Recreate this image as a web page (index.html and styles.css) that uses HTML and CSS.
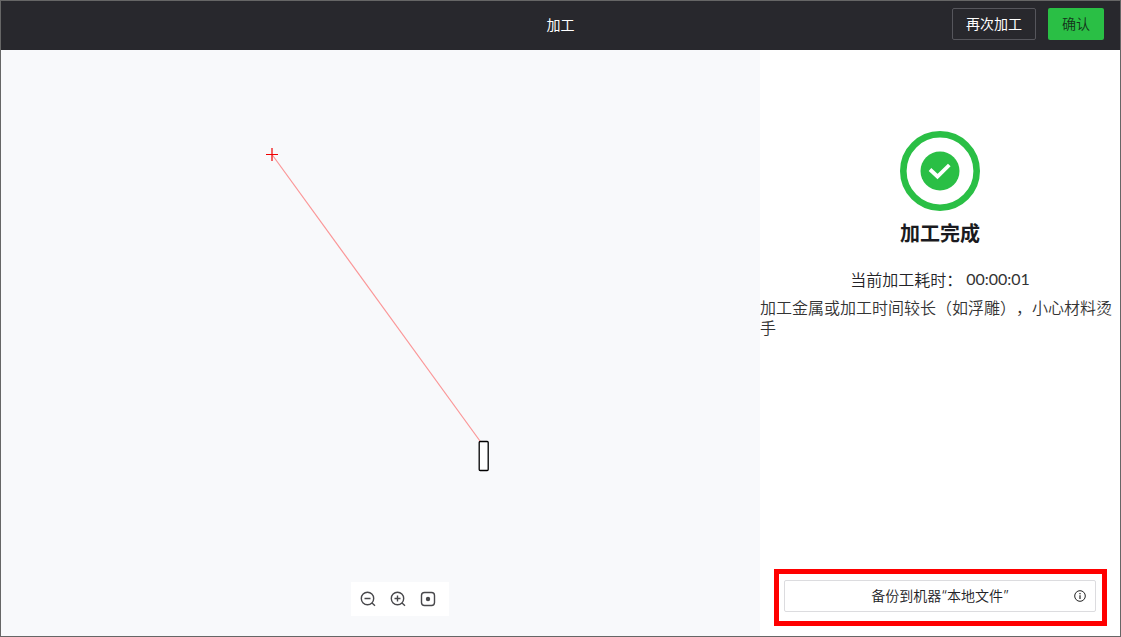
FILE: index.html
```html
<!DOCTYPE html>
<html lang="zh-CN">
<head>
<meta charset="utf-8">
<title>加工</title>
<meta name="viewport" content="width=device-width, initial-scale=1">
<link rel="stylesheet" href="styles.css">
</head>
<body>
<div class="app">
  <header class="topbar">
    <h1 class="topbar-title">加工</h1>
    <div class="topbar-actions">
      <button class="btn btn-outline" type="button">再次加工</button>
      <button class="btn btn-primary" type="button">确认</button>
    </div>
  </header>
  <main class="content">
    <section class="canvas" aria-label="画布">
      <svg class="drawing" width="759" height="586" viewBox="1 50 759 586" fill="none" aria-hidden="true">
        <path d="M272 154.500L480 441" stroke="#ff0000" stroke-opacity=".4" stroke-width="1.200"/>
        <path d="M266 154.500H278M272 148V161" stroke="#f00000" stroke-width="1.200"/>
        <rect x="479.200" y="441.500" width="9" height="29" rx="1" fill="#fff" stroke="#000" stroke-width="1.300"/>
      </svg>
      <div class="zoom-bar">
        <button class="icon-btn" type="button" aria-label="缩小">
          <svg width="16" height="16" viewBox="0 0 16 16"><circle cx="7.500" cy="7.500" r="6.200"/><path d="M12 12L15 14.800M4.500 7.500H10.500"/></svg>
        </button>
        <button class="icon-btn" type="button" aria-label="放大">
          <svg width="16" height="16" viewBox="0 0 16 16"><circle cx="7.500" cy="7.500" r="6.200"/><path d="M12 12L15 14.800M4.500 7.500H10.500M7.500 4.500V10.500"/></svg>
        </button>
        <button class="icon-btn" type="button" aria-label="居中">
          <svg width="16" height="16" viewBox="0 0 16 16"><rect x="1.500" y="1.500" width="13" height="13" rx="3"/><circle class="dot" cx="8" cy="8" r="2.200"/></svg>
        </button>
      </div>
    </section>
    <aside class="side">
      <div class="result">
        <svg width="80" height="80" viewBox="0 0 80 80" fill="none" aria-hidden="true">
          <circle cx="40" cy="40" r="36.700" stroke="#2abf45" stroke-width="6.600"/>
          <circle cx="40" cy="40" r="19.500" fill="#2abf45"/>
          <path d="M30 38.500L37.500 45.500L49.300 34" stroke="#fff" stroke-width="3.800"/>
        </svg>
        <h2 class="result-title">加工完成</h2>
        <p class="elapsed"><span>当前加工耗时：</span><span class="time">00:00:01</span></p>
        <p class="warning">加工金属或加工时间较长（如浮雕），小心材料烫手</p>
      </div>
      <div class="highlight">
        <button class="backup" type="button">
          <span class="backup-label">备份到机器“本地文件”</span>
          <svg width="12" height="12" viewBox="0 0 12 12" fill="none" stroke="#222" aria-hidden="true"><circle cx="6" cy="6" r="5.300"/><path d="M6 5.200V9M6 3V4.200" stroke-width="1.200"/></svg>
        </button>
      </div>
    </aside>
  </main>
</div>
</body>
</html>
```
FILE: styles.css
```css
* {
  box-sizing: border-box;
}

body {
  margin: 0;
  font-family: "Noto Sans CJK SC", sans-serif;
  font-weight: 350;
  color: #222226;
}

h1, h2, p {
  margin: 0;
}

button {
  font: inherit;
  color: inherit;
  cursor: pointer;
}

.app {
  display: flex;
  flex-direction: column;
  min-height: 100vh;
  border: 1px solid #666;
}

.topbar {
  display: grid;
  grid-template-columns: 1fr auto 1fr;
  align-items: center;
  height: 49px;
  padding: 0 16px 3px;
  background: #28282d;
}

.topbar-title {
  grid-column: 2;
  font-size: 14px;
  font-weight: 400;
  line-height: 20px;
  color: #fff;
}

.topbar-actions {
  display: flex;
  justify-content: flex-end;
  gap: 12px;
}

.btn {
  height: 32px;
  padding: 0 13px 2px;
  border: 1px solid transparent;
  border-radius: 2px;
  font-size: 14px;
  line-height: 20px;
}

.btn-outline {
  border-color: #56565c;
  background: transparent;
  color: #fff;
  font-weight: 400;
}

.btn-primary {
  background: #2abf45;
  color: #14341b;
}

.content {
  display: flex;
  flex: 1;
}

.canvas {
  position: relative;
  flex: 1;
  min-width: 0;
  overflow: hidden;
  background: #f8f9fb;
}

.drawing {
  position: absolute;
  top: 0;
  left: 0;
}

.zoom-bar {
  position: absolute;
  bottom: 20px;
  left: 350px;
  display: flex;
  gap: 14px;
  padding: 9px 13px 9px 9px;
  background: #fff;
}

.icon-btn {
  display: flex;
  padding: 0;
  border: 0;
  background: none;
}

.icon-btn svg {
  fill: none;
  stroke: #48484c;
  stroke-width: 1.4;
}

.icon-btn .dot {
  fill: #48484c;
  stroke: none;
}

.side {
  display: flex;
  flex-direction: column;
  justify-content: space-between;
  width: 360px;
  background: #fff;
}

.result {
  display: flex;
  flex-direction: column;
  align-items: center;
  padding-top: 81px;
}

.result-title {
  margin-top: 8px;
  font-size: 20px;
  font-weight: 700;
  line-height: 28px;
  color: #1a1a20;
}

.elapsed {
  display: flex;
  gap: 4px;
  margin-top: 22px;
  font-size: 16px;
  line-height: 20px;
}

.time {
  font-family: Lato, sans-serif;
  font-weight: 400;
  color: #333;
}

.warning {
  margin-top: 8px;
  font-size: 16px;
  line-height: 20px;
  text-spacing-trim: space-all;
  color: #333;
}

.highlight {
  margin: 0 13px 10px 14px;
  padding: 6px 6px 9px 5px;
  border: 5px solid #f00;
}

.backup {
  display: grid;
  grid-template-columns: 1fr auto 1fr;
  align-items: center;
  width: 100%;
  height: 32px;
  padding: 0 9px;
  border: 1px solid #dcdcdf;
  border-radius: 2px;
  background: #fff;
  font-family: Inter, "Noto Sans CJK SC", sans-serif;
  font-size: 14px;
  line-height: 20px;
}

.backup-label {
  grid-column: 2;
}

.backup svg {
  justify-self: end;
}
```
